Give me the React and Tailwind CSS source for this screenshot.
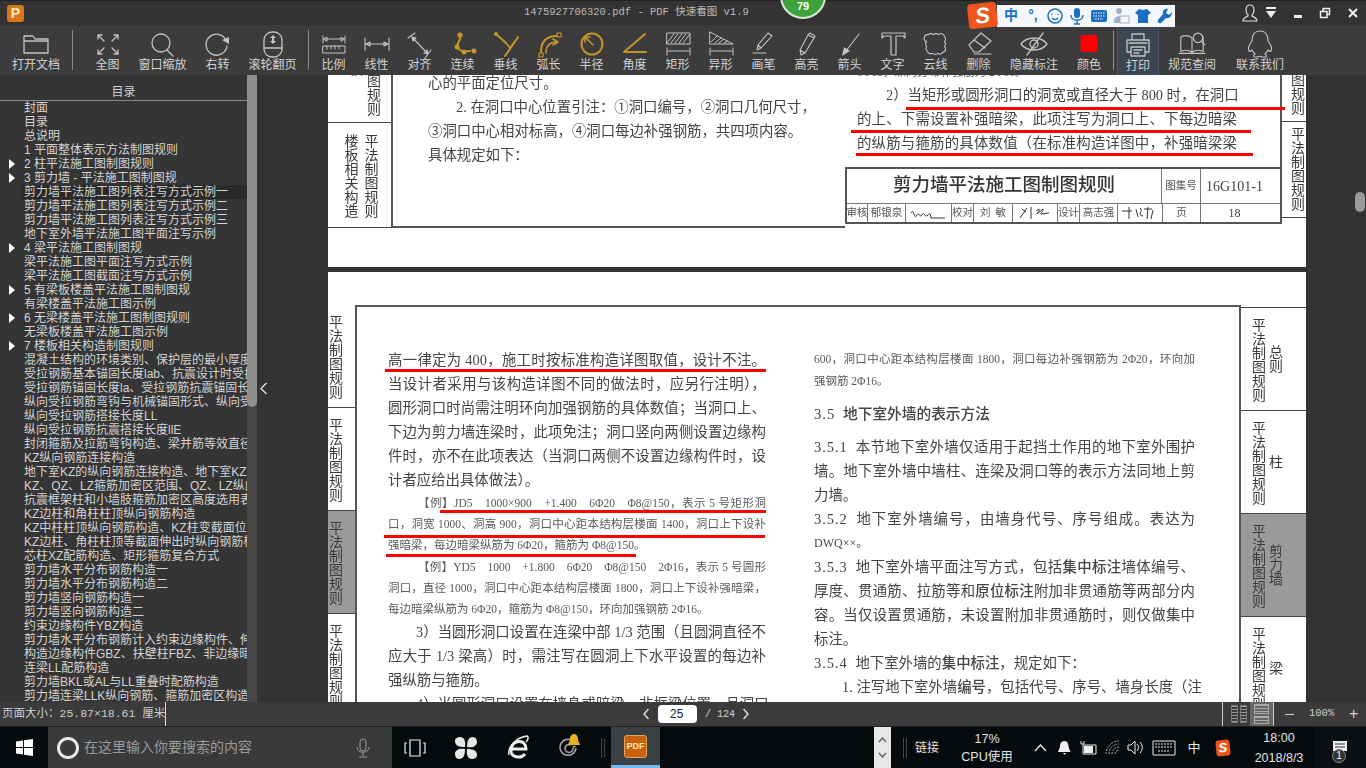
import React from "react";

const stroke = { fill: "none", stroke: "#c4c4c4", strokeWidth: 1.3, strokeLinecap: "round", strokeLinejoin: "round" };
const gold = { fill: "none", stroke: "#c5952c", strokeWidth: 2, strokeLinecap: "round", strokeLinejoin: "round" };

const ToolSvg = ({ children }) => (
  <svg width="34" height="30" viewBox="0 0 34 30" className="block">
    {children}
  </svg>
);

const hatch = (
  <g stroke="#c4c4c4" strokeWidth="1">
    <path d="M6 14L13 5M10 14L17 5M14 14L21 5M18 14L25 5M22 14L29 5" />
  </g>
);

const icons = {
  folder: <path {...stroke} d="M5 24V7h9l2 3h13v14zM5 12h24" />,
  fit: <path {...stroke} d="M7 6l6 6M7 6v4M7 6h4M27 6l-6 6M27 6v4M27 6h-4M7 25l6-6M7 25v-4M7 25h4M27 25l-6-6M27 25v-4M27 25h-4" />,
  search: <path {...stroke} d="M24 14a9 9 0 1 1-18 0a9 9 0 0 1 18 0zM21 21l6 6" />,
  rotate: (
    <g>
      <path {...stroke} d="M25 11a10.500 10.500 0 1 0 1 6" />
      <path fill="#c4c4c4" d="M21 11l7-3v7z" />
    </g>
  ),
  mouse: (
    <g>
      <rect {...stroke} x="8" y="3" width="18" height="25" rx="8" />
      <path {...stroke} d="M8 19h18" />
      <path fill="#c4c4c4" d="M17 6l3 3h-2v3h2l-3 3l-3-3h2V9h-2z" />
    </g>
  ),
  scale: (
    <g>
      <path {...stroke} strokeWidth="1" d="M6 7v7M28 7v7M7 10h20M7 10l3-2v4zM27 10l-3-2v4z" />
      <path {...stroke} strokeWidth="1" d="M6 17h22v7H6zM10 17v3M14 17v3M18 17v3M22 17v3" />
    </g>
  ),
  linear: <path {...stroke} strokeWidth="1.100" d="M5 9v12M29 9v12M6 15h22M6 15l4-2v4zM28 15l-4-2v4z" />,
  align: <path {...stroke} strokeWidth="1.100" d="M5 9l7-5M22 29l6-8M9 8l16 17M9 8l1 4l3-3zM25 25l-4-1l3-3z" />,
  chain: (
    <g>
      <path {...gold} strokeWidth="2" d="M14 6c2 6-5 8-2 13c2 3 6 4 12 3" />
      <circle cx="14" cy="6" r="2.500" fill="#c5952c" />
      <circle cx="11" cy="18" r="2.500" fill="#c5952c" />
      <circle cx="18" cy="23" r="2.500" fill="#c5952c" />
      <circle cx="28" cy="22" r="2.500" fill="#c5952c" />
    </g>
  ),
  perp: (
    <g>
      <path {...gold} d="M29 8L16 27M7 5l10 9" />
      <path {...gold} strokeWidth="1.500" d="M17 14l4 5l4-5" />
      <circle cx="7" cy="5" r="2" fill="#c5952c" />
    </g>
  ),
  arc: (
    <g>
      <path {...gold} d="M9 23c0-10 5-16 16-16" />
      <path {...gold} strokeWidth="1.500" d="M14 24c0-7 4-11 11-11M21 10l5 3l-5 3" />
      <path fill="none" stroke="#c5952c" strokeWidth="1.200" d="M7 24h4v4H7zM25 4h4v4h-4z" />
    </g>
  ),
  radius: (
    <g>
      <circle {...gold} cx="17" cy="15" r="10.500" />
      <path {...gold} strokeWidth="1.500" d="M18 16l-8-8M10 8v5M10 8h5" />
    </g>
  ),
  angle: <path {...gold} d="M27 5L6 23h22" />,
  rect: (
    <g>
      <path {...stroke} strokeWidth="1" d="M6 4h23v11H6z" />
      {hatch}
      <path {...stroke} strokeWidth="1" d="M6 19v7M29 19v7M7 22h21" />
    </g>
  ),
  shape: (
    <g>
      <path {...stroke} strokeWidth="1" d="M6 3l23 12H6z" />
      <path stroke="#c4c4c4" strokeWidth="1" d="M7 13L13 7M11 14L17 9M15 14L20 10M20 14l4-2" />
      <path {...stroke} strokeWidth="1" d="M6 19v7M29 19v7M7 22h21" />
    </g>
  ),
  pen: <path {...stroke} strokeWidth="1.100" d="M10 21l1-5L21 4l4 3L14 19zM11 16l3 3M6 24h13" />,
  marker: <path {...stroke} strokeWidth="1.100" d="M11 26l-1-5L18 6l6 3l-9 15zM10 21l5 3M18 6l2-2l5 3l-1 2" />,
  arrow: (
    <g>
      <path {...stroke} strokeWidth="1.100" d="M26 5L13 22" />
      <path fill="#c4c4c4" d="M9 27l2-9l6 4z" />
    </g>
  ),
  text: <path {...stroke} strokeWidth="1.200" d="M6 9V4h23v5l-2-2h-7v19h-5V7H8z" />,
  cloud: (
    <g transform="translate(17 15) scale(0.84) translate(-17 -15)">
      <path {...stroke} strokeWidth="1.300" d="M8 4a4 4 0 0 1 6 0a4 4 0 0 1 6 0a4 4 0 0 1 7 2a4 4 0 0 1 0 6a4 4 0 0 1 0 6a4 4 0 0 1-2 7a4 4 0 0 1-6 1a4 4 0 0 1-6 0a4 4 0 0 1-6-2a4 4 0 0 1-1-6a4 4 0 0 1 0-6a4 4 0 0 1 2-8z" />
    </g>
  ),
  eraser: <path {...stroke} strokeWidth="1.200" d="M7 16L19 4l10 8L17 23h-5zM12 11l11 8M12 25h17" />,
  eye: <path {...stroke} strokeWidth="1.300" d="M4 15c6-8 20-8 26 0c-6 8-20 8-26 0zM21 15a4 4 0 1 1-8 0a4 4 0 0 1 8 0zM26 4L10 26" />,
  color: <rect x="8.500" y="6" width="17" height="17" rx="2" fill="#ff0000" />,
  print: <path {...stroke} strokeWidth="1.300" d="M11 10V4h12v6M10 22H6V10h22v12h-4M10 17h14v9H10zM13 20h8M13 23h5M8 13h18" />,
  book: (
    <g transform="translate(17 14) scale(0.86) translate(-17 -15)">
      <path {...stroke} strokeWidth="1.300" d="M17 9c-4-3-9-3-13-1v17c4-2 9-2 13 1c4-3 9-3 13-1V8M17 9v17M2 27h30" />
      <circle {...stroke} strokeWidth="1.400" cx="24" cy="9" r="5.500" />
      <path {...stroke} strokeWidth="1.400" d="M28 13l4 4" />
    </g>
  ),
  qq: <path {...stroke} strokeWidth="1.200" d="M17 2c-6 0-8 5-8 10c-3 4-4 8-3 10c1 1 3-1 3-1c1 2 2 3 3 4c-2 1-2 3 0 3h3c1-1 3-1 4 0h3c2 0 2-2 0-3c1-1 2-2 3-4c0 0 2 2 3 1c1-2 0-6-3-10c0-5-2-10-8-10z" />,
};

const toolsA = [
  { label: "全图", icon: "fit", w: "w-[55px]" },
  { label: "窗口缩放", icon: "search", w: "w-[55px]" },
  { label: "右转", icon: "rotate", w: "w-[55px]" },
  { label: "滚轮翻页", icon: "mouse", w: "w-[55px]" },
];

const toolsB = [
  ["比例", "scale"], ["线性", "linear"], ["对齐", "align"], ["连续", "chain"], ["垂线", "perp"],
  ["弧长", "arc"], ["半径", "radius"], ["角度", "angle"], ["矩形", "rect"], ["异形", "shape"],
  ["画笔", "pen"], ["高亮", "marker"], ["箭头", "arrow"], ["文字", "text"], ["云线", "cloud"], ["删除", "eraser"],
];

const Tool = ({ label, icon, w, active }) => (
  <div className={`${w} h-[50px] shrink-0 flex flex-col items-center pt-[4px] ${active ? "bg-[#3a4752] border-x border-t border-[#46586a]" : ""}`}>
    <ToolSvg>{icons[icon]}</ToolSvg>
    <span className="text-[12px] leading-[15px] -mt-[1px] text-[#d2d2d2] whitespace-nowrap">{label}</span>
  </div>
);

const Sep = ({ cls }) => <div className={`w-px h-[40px] my-[5px] bg-[#8a8a8a] shrink-0 ${cls}`} />;

const toc = [
  ["封面"], ["目录"], ["总说明"], ["1 平面整体表示方法制图规则"], ["2 柱平法施工图制图规则", 1], ["3 剪力墙 - 平法施工图制图规", 1],
  ["剪力墙平法施工图列表注写方式示例一", 0, 1], ["剪力墙平法施工图列表注写方式示例二"], ["剪力墙平法施工图列表注写方式示例三"],
  ["地下室外墙平法施工图平面注写示例"], ["4 梁平法施工图制图规", 1], ["梁平法施工图平面注写方式示例"], ["梁平法施工图截面注写方式示例"],
  ["5 有梁板楼盖平法施工图制图规", 1], ["有梁楼盖平法施工图示例"], ["6 无梁楼盖平法施工图制图规则", 1], ["无梁板楼盖平法施工图示例"],
  ["7 楼板相关构造制图规则", 1], ["混凝土结构的环境类别、保护层的最小厚度"], ["受拉钢筋基本锚固长度lab、抗震设计时受拉钢筋"],
  ["受拉钢筋锚固长度la、受拉钢筋抗震锚固长度"], ["纵向受拉钢筋弯钩与机械锚固形式、纵向受力钢筋"], ["纵向受拉钢筋搭接长度LL"],
  ["纵向受拉钢筋抗震搭接长度llE"], ["封闭箍筋及拉筋弯钩构造、梁并筋等效直径"], ["KZ纵向钢筋连接构造"], ["地下室KZ的纵向钢筋连接构造、地下室KZ的"],
  ["KZ、QZ、LZ箍筋加密区范围、QZ、LZ纵向钢筋"], ["抗震框架柱和小墙肢箍筋加密区高度选用表"], ["KZ边柱和角柱柱顶纵向钢筋构造"],
  ["KZ中柱柱顶纵向钢筋构造、KZ柱变截面位置"], ["KZ边柱、角柱柱顶等截面伸出时纵向钢筋构造"], ["芯柱XZ配筋构造、矩形箍筋复合方式"],
  ["剪力墙水平分布钢筋构造一"], ["剪力墙水平分布钢筋构造二"], ["剪力墙竖向钢筋构造一"], ["剪力墙竖向钢筋构造二"], ["约束边缘构件YBZ构造"],
  ["剪力墙水平分布钢筋计入约束边缘构件、伸"], ["构造边缘构件GBZ、扶壁柱FBZ、非边缘暗柱"], ["连梁LL配筋构造"], ["剪力墙BKL或AL与LL重叠时配筋构造"],
  ["剪力墙连梁LLK纵向钢筋、箍筋加密区构造"],
];

// scanned text line, just stretches it to the column width
const L = ({ children, just, cls = "" }) => (
  <div className={`whitespace-nowrap ${just ? "[text-align-last:justify]" : ""} ${cls}`}>{children}</div>
);

const Big = ({ children, just, cls = "" }) => (
  <L just={just} cls={`h-[24px] leading-[24px] text-[14.4px] text-[#444] ${cls}`}>{children}</L>
);

const Small = ({ children, just, cls = "" }) => (
  <L just={just} cls={`h-[21px] leading-[21px] text-[11.5px] text-[#595959] ${cls}`}>{children}</L>
);

const Num = ({ children }) => <span className="tracking-[1px] mr-[4px]">{children}</span>;

const RedLine = ({ cls }) => <div className={`absolute h-[3px] bg-[#ff0000] ${cls}`} />;

const Vert = ({ children, cls = "" }) => (
  <div className={`[writing-mode:vertical-rl] text-[14px] leading-[16px] text-[#3a3a3a] ${cls}`}>{children}</div>
);

const RightTab = ({ name, gray }) => (
  <div className={`h-[103px] border-t border-[#444] flex ${gray ? "bg-[#9a9a9a]" : ""}`}>
    <Vert cls="ml-[8px] mt-[10px] h-[90px] overflow-hidden">平法制图规则</Vert>
    <Vert cls="ml-[1px] self-center">{name}</Vert>
  </div>
);

const LeftTab = ({ gray }) => (
  <div className={`h-[103px] border-b border-[#444] overflow-hidden ${gray ? "bg-[#9a9a9a]" : ""}`}>
    <Vert cls="-ml-[2px] mt-[10px]">平法制图规则</Vert>
  </div>
);

const Cell = ({ w, children, cls = "" }) => (
  <div className={`${w} border-r border-[#777] flex items-center justify-center whitespace-nowrap text-[10.500px] text-[#555] ${cls}`}>{children}</div>
);

const Sig = ({ d }) => (
  <svg width="40" height="16" viewBox="0 0 40 16">
    <path d={d} fill="none" stroke="#333" strokeWidth="1" />
  </svg>
);

const Page1 = () => (
  <div className="h-[192px] w-[978px] bg-white flex overflow-hidden shrink-0">
    <div className="w-[63px] shrink-0">
      <div className="h-[48px] border-b border-[#444] relative overflow-hidden">
        <Vert cls="absolute left-[36px] -top-[1px]">图规则</Vert>
        <Vert cls="absolute left-[18px] -top-[13px]">板</Vert>
      </div>
      <div className="h-[105px] border-b border-[#444] flex justify-center gap-[4px] pt-[11px] overflow-hidden">
        <Vert>楼板相关构造</Vert>
        <Vert>平法制图规则</Vert>
      </div>
    </div>
    <div className="w-[454px] shrink-0 h-[153px] border-l-2 border-b-2 border-[#555] pl-[35px] overflow-hidden">
      <div className="-mt-[4px]">
        <Big>心的平面定位尺寸。</Big>
        <Big cls="pl-[28px]">2. 在洞口中心位置引注：①洞口编号，②洞口几何尺寸，</Big>
        <Big>③洞口中心相对标高，④洞口每边补强钢筋，共四项内容。</Big>
        <Big>具体规定如下：</Big>
      </div>
    </div>
    <div className="w-[437px] shrink-0 h-[149px] overflow-hidden flex flex-col">
      <div className="flex-1 border-r-2 border-[#555] pl-[12px] overflow-hidden">
        <div className="-mt-[13px] w-[380px]">
          <Small cls="h-[19px] leading-[19px]">6Φ18，纵向分布补强筋为 2Φ16。</Small>
          <Big cls="pl-[29px]">2）当矩形或圆形洞口的洞宽或直径大于 800 时，在洞口</Big>
          <Big just>的上、下需设置补强暗梁，此项注写为洞口上、下每边暗梁</Big>
          <Big just>的纵筋与箍筋的具体数值（在标准构造详图中，补强暗梁梁</Big>
        </div>
      </div>
      <div className="h-[57px] shrink-0 border-2 border-[#555] flex flex-col">
        <div className="h-[36px] flex border-b border-[#777]">
          <div className="w-[315px] border-r border-[#777] flex items-center justify-center text-[18.500px] font-medium text-[#333]">剪力墙平法施工图制图规则</div>
          <Cell w="w-[39px]">图集号</Cell>
          <div className="flex-1 flex items-center justify-center pr-[12px] text-[14px] text-[#444]">16G101-1</div>
        </div>
        <div className="flex-1 flex">
          <Cell w="w-[21px]">审核</Cell>
          <Cell w="w-[38px]">郁银泉</Cell>
          <Cell w="w-[46px]"><Sig d="M2 8c3-6 3 8 6 2c2-3 3 3 5 0c2-4 3 2 5 1c3-3 3-4 4 2h14" /></Cell>
          <Cell w="w-[22px]">校对</Cell>
          <Cell w="w-[39px]">刘&nbsp;&nbsp;敏</Cell>
          <Cell w="w-[45px]"><Sig d="M7 4l4 3M5 13l7-10M16 2v12M21 6l3-2c1 4-3 4-2 5l6-5c0 4-3 4-2 5l8-1" /></Cell>
          <Cell w="w-[22px]">设计</Cell>
          <Cell w="w-[38px]">高志强</Cell>
          <Cell w="w-[45px]"><Sig d="M2 6h10M9 2v12M16 4l2 8M20 3c4 3-4 7 3 8M24 4h8M28 2l-1 12M33 5l-2 9" /></Cell>
          <Cell w="w-[38px]">页</Cell>
          <div className="flex-1 flex items-center justify-center pr-[12px] text-[12px] text-[#444]">18</div>
        </div>
      </div>
    </div>
    <div className="w-[24px] shrink-0 h-[147px] overflow-hidden">
      <div className="h-[47px] border-b border-[#444] relative overflow-hidden">
        <Vert cls="absolute left-[6px] -top-[2px]">图规则</Vert>
      </div>
      <Vert cls="ml-[6px] mt-[5px] h-[90px] overflow-hidden">平法制图规则</Vert>
      <div className="border-t border-[#444]" />
    </div>
  </div>
);

const Page2 = () => (
  <div className="w-[978px] h-[500px] bg-white flex shrink-0 mt-[5px]">
    <div className="w-[27px] shrink-0 pt-[33px]">
      <LeftTab />
      <LeftTab />
      <LeftTab gray />
      <LeftTab />
    </div>
    <div className="w-[886px] shrink-0 mt-[33px] border-t-2 border-l-2 border-r-2 border-[#555] flex pl-[31px] pt-[41px] gap-[48px]">
      <div className="w-[378px] shrink-0">
        <Big just>高一律定为 400，施工时按标准构造详图取值，设计不注。</Big>
        <Big just>当设计者采用与该构造详图不同的做法时，应另行注明），</Big>
        <Big just>圆形洞口时尚需注明环向加强钢筋的具体数值；当洞口上、</Big>
        <Big just>下边为剪力墙连梁时，此项免注；洞口竖向两侧设置边缘构</Big>
        <Big just>件时，亦不在此项表达（当洞口两侧不设置边缘构件时，设</Big>
        <Big>计者应给出具体做法）。</Big>
        <Small just cls="pl-[30px] mt-[1px]">【例】JD5　1000×900　+1.400　6Φ20　Φ8@150，表示 5 号矩形洞</Small>
        <Small just>口，洞宽 1000、洞高 900，洞口中心距本结构层楼面 1400，洞口上下设补</Small>
        <Small>强暗梁，每边暗梁纵筋为 6Φ20，箍筋为 Φ8@150。</Small>
        <Small just cls="pl-[30px] mt-[1px]">【例】YD5　1000　+1.800　6Φ20　Φ8@150　2Φ16，表示 5 号圆形</Small>
        <Small just>洞口，直径 1000，洞口中心距本结构层楼面 1800，洞口上下设补强暗梁，</Small>
        <Small>每边暗梁纵筋为 6Φ20，箍筋为 Φ8@150，环向加强钢筋 2Φ16。</Small>
        <Big just cls="pl-[28px]">3）当圆形洞口设置在连梁中部 1/3 范围（且圆洞直径不</Big>
        <Big just>应大于 1/3 梁高）时，需注写在圆洞上下水平设置的每边补</Big>
        <Big>强纵筋与箍筋。</Big>
        <Big just cls="pl-[28px]">4）当圆形洞口设置在墙身或暗梁、非框梁位置，且洞口</Big>
      </div>
      <div className="w-[381px] shrink-0">
        <Small just cls="h-[22px] leading-[22px]">600，洞口中心距本结构层楼面 1800，洞口每边补强钢筋为 2Φ20，环向加</Small>
        <Small cls="h-[22px] leading-[22px]">强钢筋 2Φ16。</Small>
        <Big cls="mt-[10px] font-medium text-[14.7px] text-[#333]"><Num>3.5</Num>&nbsp;地下室外墙的表示方法</Big>
        <Big just cls="mt-[9px]"><Num>3.5.1</Num>&nbsp;本节地下室外墙仅适用于起挡土作用的地下室外围护</Big>
        <Big just>墙。地下室外墙中墙柱、连梁及洞口等的表示方法同地上剪</Big>
        <Big>力墙。</Big>
        <Big just><Num>3.5.2</Num>&nbsp;地下室外墙编号，由墙身代号、序号组成。表达为</Big>
        <Big cls="!text-[12px]">DWQ××。</Big>
        <Big just><Num>3.5.3</Num>&nbsp;地下室外墙平面注写方式，包括<b className="font-medium">集中标注</b>墙体编号、</Big>
        <Big just>厚度、贯通筋、拉筋等和<b className="font-medium">原位标注</b>附加非贯通筋等两部分内</Big>
        <Big just>容。当仅设置贯通筋，未设置附加非贯通筋时，则仅做集中</Big>
        <Big>标注。</Big>
        <Big><Num>3.5.4</Num>&nbsp;地下室外墙的<b className="font-medium">集中标注</b>，规定如下：</Big>
        <Big just cls="pl-[28px]">1. 注写地下室外墙<b className="font-medium">编号</b>，包括代号、序号、墙身长度（注</Big>
      </div>
    </div>
    <div className="w-[65px] shrink-0 pt-[35px]">
      <RightTab name="总则" />
      <RightTab name="柱" />
      <RightTab name="剪力墙" gray />
      <RightTab name="梁" />
    </div>
  </div>
);

const Small16 = ({ children, cls = "" }) => (
  <svg width="18" height="18" viewBox="0 0 18 18" className={`shrink-0 ${cls}`}>{children}</svg>
);

const SogouBar = () => (
  <div className="absolute left-[968px] top-[2px] flex items-center z-10">
    <div className="w-[29px] h-[25px] bg-[#f0551e] rounded-[4px] -rotate-6 flex items-center justify-center text-white font-black italic text-[22px] leading-none shrink-0">S</div>
    <div className="w-[178px] h-[22px] bg-[#f4f7fb] flex items-center gap-[4px] pl-[5px] text-[#1a6fc4] text-[14px] font-bold">
      <span className="w-[18px] text-center">中</span>
      <span className="w-[18px] text-center">°,</span>
      <Small16><circle cx="9" cy="9" r="7" fill="none" stroke="#1a6fc4" strokeWidth="1.500" /><path d="M6 7v1M12 7v1M6 11c2 2 4 2 6 0" stroke="#1a6fc4" fill="none" strokeWidth="1.400" /></Small16>
      <Small16><rect x="6" y="1" width="6" height="10" rx="3" fill="#1a6fc4" /><path d="M3 8c0 7 12 7 12 0M9 13v4M6 17h6" stroke="#1a6fc4" fill="none" strokeWidth="1.400" /></Small16>
      <Small16><rect x="1" y="3" width="16" height="12" rx="2" fill="#1a6fc4" /><path d="M3 6h12M3 9h12M5 12h8" stroke="#fff" strokeDasharray="1.500 1" /></Small16>
      <Small16><circle cx="7" cy="4" r="3" fill="#9fb2c4" /><path d="M2 14c0-6 9-6 10-2v4H2z" fill="#9fb2c4" /><rect x="8" y="9" width="9" height="7" fill="#f4f7fb" stroke="#9fb2c4" /></Small16>
      <Small16><path d="M5 2l4 1l4-1l4 4l-3 2v8H4V8L1 6z" fill="#1a6fc4" /></Small16>
      <Small16><path d="M16 5l-3 3l-3-2l2-4c-3-1-6 2-5 5L2 13c-1 2 1 4 3 3l5-5c3 1 6-2 6-6z" fill="#1a6fc4" /></Small16>
    </div>
  </div>
);

const TitleBar = () => (
  <div className="h-[25px] bg-[#333333] border-t border-[#222] relative flex items-center shrink-0">
    <div className="ml-[7px] w-[17px] h-[17px] rounded-[3px] bg-[#d9761c] flex items-center justify-center text-[#ffe9b8] text-[14px] font-bold leading-none">P</div>
    <div className="ml-[500px] w-[224px] text-[10.500px] text-[#b9b9b9] whitespace-nowrap font-['Liberation_Mono','Noto_Sans_CJK_SC',monospace]">1475927706320.pdf - PDF 快速看图 v1.9</div>
    <div className="absolute left-[780px] -top-[28px] w-[46px] h-[46px] rounded-full bg-[#3da23c] border-2 border-[#d8ead6] flex items-end justify-center pb-[3px] text-white text-[11px] font-bold z-10">79</div>
    <SogouBar />
    <div className="absolute right-0 top-0 h-[24px] flex items-center">
      <svg width="20" height="20" viewBox="0 0 20 20" className="mr-[4px]"><path fill="none" stroke="#ddd" strokeWidth="1.200" d="M10 2c-3 0-4 2-4 5c0 2 1 4 2 5v1c-2 1-5 2-5 5h14c0-3-3-4-5-5v-1c1-1 2-3 2-5c0-3-1-5-4-5z" /></svg>
      <svg width="14" height="14" viewBox="0 0 14 14" className="mr-[16px]"><path fill="#eee" d="M2 1h10v2H2zM2 5h10l-5 7z" /></svg>
      <div className="w-[8px] h-[3px] bg-[#eee] mt-[6px] mr-[17px]" />
      <svg width="12" height="12" viewBox="0 0 12 12" className="mr-[16px]"><path fill="none" stroke="#eee" strokeWidth="1.500" d="M1.500 4.500h6.500v6h-6.500zM4 4V1.500h6.500v6H8" /></svg>
      <svg width="12" height="12" viewBox="0 0 12 12" className="mr-[7px]"><path stroke="#eee" strokeWidth="2" d="M2 2l8 8M10 2l-8 8" /></svg>
    </div>
  </div>
);

const Toolbar = () => (
  <div className="h-[50px] bg-[#3c3c3c] flex shrink-0">
    <Tool label="打开文档" icon="folder" w="w-[72px]" />
    <Sep />
    <div className="w-[7px] shrink-0" />
    {toolsA.map((t) => <Tool key={t.label} {...t} />)}
    <div className="w-[8px] shrink-0" />
    <Sep />
    <div className="w-[3px] shrink-0" />
    {toolsB.map(([label, icon]) => <Tool key={label} label={label} icon={icon} w="w-[43px]" />)}
    <div className="w-[1px] shrink-0" />
    <Tool label="隐藏标注" icon="eye" w="w-[66px]" />
    <Tool label="颜色" icon="color" w="w-[44px]" />
    <div className="w-[2px] shrink-0" />
    <Sep />
    <div className="w-[3px] shrink-0" />
    <Tool label="打印" icon="print" w="w-[42px]" active />
    <div className="w-[6px] shrink-0" />
    <Tool label="规范查阅" icon="book" w="w-[54px]" />
    <div className="w-[14px] shrink-0" />
    <Tool label="联系我们" icon="qq" w="w-[54px]" />
  </div>
);

const Sidebar = () => (
  <div className="w-[247px] shrink-0 bg-[#353535] overflow-hidden">
    <div className="h-[26px] border-b border-[#8a8a8a] flex items-end justify-center text-[12px] leading-[16px] text-[#cfcfcf]">目录</div>
    <div className="font-['Liberation_Sans','Noto_Sans_CJK_SC',sans-serif]">
      {toc.map(([name, arrow, sel]) => (
        <div key={name} className={`relative h-[14px] leading-[14px] text-[12px] text-[#d4d4d4] whitespace-nowrap overflow-hidden pl-[24px] ${sel ? "bg-[#2a2a2a] ml-[21px] !pl-[3px]" : ""}`}>
          {arrow ? <span className="absolute left-[9px] top-[2px] w-0 h-0 border-y-[5px] border-y-transparent border-l-[6px] border-l-white" /> : null}
          {name}
        </div>
      ))}
    </div>
  </div>
);

const Main = () => (
  <div className="h-[627px] flex bg-[#333333] overflow-hidden shrink-0">
    <Sidebar />
    <div className="w-[10px] shrink-0 bg-[#474747]">
      <div className="h-[332px] bg-[#8f8f8f] rounded-b-[5px]" />
    </div>
    <div className="w-[13px] shrink-0 flex items-center justify-center text-[#e0e0e0]">
      <svg width="9" height="13" viewBox="0 0 9 13"><path d="M7.500 1L2 6.500L7.500 12" fill="none" stroke="#ddd" strokeWidth="1.500" /></svg>
    </div>
    <div className="flex-1 pl-[58px] relative overflow-hidden font-['Liberation_Serif','Noto_Sans_CJK_SC',serif]">
      <div className="blur-[0.35px]">
        <Page1 />
        <Page2 />
      </div>
      {/* markup drawn by the user on top of the scan, coordinates are relative to this pane */}
      <RedLine cls="left-[636px] top-[32px] w-[379px]" />
      <RedLine cls="left-[581px] top-[55px] w-[400px]" />
      <RedLine cls="left-[586px] top-[78px] w-[397px]" />
      <RedLine cls="left-[115px] top-[294px] w-[381px]" />
      <RedLine cls="left-[170px] top-[435px] w-[326px]" />
      <RedLine cls="left-[114px] top-[460px] w-[381px]" />
      <RedLine cls="left-[116px] top-[479px] w-[250px]" />
    </div>
    <div className="w-[11px] shrink-0 pt-[117px]">
      <div className="w-[10px] h-[20px] rounded-[5px] bg-[#9a9a9a]" />
    </div>
  </div>
);

const StatusBar = () => (
  <div className="h-[25px] bg-[#3b3b3b] border-b border-[#222] flex items-center text-[#cfcfcf] text-[12px] shrink-0">
    <div className="ml-[2px] w-[164px] h-[24px] leading-[24px] border-r border-[#ddd] whitespace-nowrap font-['Liberation_Mono','Noto_Sans_CJK_SC',monospace] text-[11.5px]">页面大小：25.87×18.61 厘米</div>
    <svg width="8" height="12" viewBox="0 0 8 12" className="ml-[476px]"><path d="M6.500 1L2 6l4.500 5" fill="none" stroke="#ddd" strokeWidth="1.500" /></svg>
    <div className="ml-[8px] w-[39px] h-[18px] bg-white rounded-[4px] text-[#222] text-[12px] leading-[18px] pl-[12px]">25</div>
    <div className="ml-[8px] w-[36px] text-[10px] whitespace-nowrap font-['Liberation_Mono',monospace]">/ 124</div>
    <svg width="8" height="12" viewBox="0 0 8 12" className="ml-[1px]"><path d="M1.500 1L6 6l-4.500 5" fill="none" stroke="#ddd" strokeWidth="1.500" /></svg>
    <div className="ml-[472px] w-px h-[24px] bg-[#ccc]" />
    <div className="ml-[6px] w-[20px] h-[20px] flex items-center justify-center gap-[2px]">
      <div className="w-[7px] h-[18px] border border-[#777] bg-[repeating-linear-gradient(#999_0_1px,transparent_1px_3px)]" />
      <div className="w-[7px] h-[18px] border border-[#777] bg-[repeating-linear-gradient(#999_0_1px,transparent_1px_3px)]" />
    </div>
    <div className="ml-[1px] w-[23px] h-[24px] bg-[#666] flex flex-col items-center justify-center gap-[2px]">
      <div className="w-[15px] h-[10px] border border-[#aaa] bg-[repeating-linear-gradient(#aaa_0_1px,transparent_1px_3px)]" />
      <div className="w-[15px] h-[8px] border border-[#aaa] bg-[repeating-linear-gradient(#aaa_0_1px,transparent_1px_3px)]" />
    </div>
    <div className="w-px h-[24px] bg-[#ccc]" />
    <div className="ml-[11px] w-[9px] h-px bg-[#ccc]" />
    <div className="ml-[15px] w-[30px] text-[10.500px] font-['Liberation_Mono',monospace] whitespace-nowrap">100%</div>
    <div className="ml-[10px] text-[16px] leading-none">+</div>
  </div>
);

const Tray = ({ w, children, cls = "" }) => (
  <div className={`${w} shrink-0 flex items-center justify-center h-full ${cls}`}>{children}</div>
);

const Taskbar = () => (
  <div className="flex-1 bg-[#050a0d] flex items-center text-[#e4e4e4] font-['Liberation_Sans','Noto_Sans_CJK_SC',sans-serif] overflow-hidden">
    <Tray w="w-[48px]">
      <svg width="17" height="17" viewBox="0 0 17 17"><path fill="#fff" d="M0 2.500l7-1v6.500H0zM8 1.300l9-1.300v8H8zM0 9h7v6.500l-7-1zM8 9h9v8l-9-1.300z" /></svg>
    </Tray>
    <div className="w-[344px] h-full bg-[#3a3a3a] flex items-center shrink-0">
      <div className="ml-[9px] w-[22px] h-[22px] rounded-full border-[3px] border-[#e8e8e8] shrink-0" />
      <div className="ml-[5px] w-[270px] text-[14px] text-[#9a9a9a] whitespace-nowrap">在这里输入你要搜索的内容</div>
      <svg width="14" height="20" viewBox="0 0 14 20" className="ml-[2px]"><rect x="4" y="1" width="6" height="12" rx="3" fill="none" stroke="#999" /><path d="M1 9c0 7 12 7 12 0M7 15v3M3 19h8" fill="none" stroke="#999" /></svg>
    </div>
    <Tray w="w-[46px]">
      <svg width="22" height="18" viewBox="0 0 22 18"><path d="M6 1h10v16H6zM3 4H1v10h2M19 4h2v10h-2" fill="none" stroke="#eee" strokeWidth="1.200" /></svg>
    </Tray>
    <Tray w="w-[56px]">
      <svg width="24" height="24" viewBox="0 0 24 24"><path fill="#e8e8e8" d="M11 11C4 11 1 9 1 5c0-3 3-4 5-4c4 0 6 4 5 10zM13 11c0-7 2-10 6-10c3 0 4 3 4 5c0 4-4 6-10 5zM13 13c7 0 10 2 10 6c0 3-3 4-5 4c-4 0-6-4-5-10zM11 13c0 7-2 10-6 10c-3 0-4-3-4-5c0-4 4-6 10-5z" /></svg>
    </Tray>
    <Tray w="w-[48px]">
      <svg width="24" height="26" viewBox="0 0 24 26"><path fill="none" stroke="#eee" strokeWidth="3" d="M5 14h15c0-10-13-10-15 0c-1 9 10 10 14 5" /><path fill="none" stroke="#eee" strokeWidth="1.500" d="M3 20C1 11 12 2 21 1c2 1 1 4-1 6" /></svg>
    </Tray>
    <Tray w="w-[52px]" cls="relative">
      <svg width="18" height="20" viewBox="0 0 18 20"><path fill="none" stroke="#aaa" strokeWidth="1.500" d="M14 3A8 8 0 1 0 17 10M12 7a4 4 0 1 0 2 3" /></svg>
      <svg width="14" height="16" viewBox="0 0 14 16" className="absolute left-[25px] top-[6px]"><path fill="#e8b321" d="M7 1c3 0 4 3 4 5c0 3 2 4 2 6H1c0-2 2-3 2-6c0-2 1-5 4-5zM5 13h4l-2 2z" /></svg>
    </Tray>
    <div className="w-px h-[20px] bg-[#444] ml-[7px]" />
    <div className="w-px h-[20px] bg-[#444] ml-[2px] mr-[6px]" />
    <div className="w-[49px] h-full bg-[#3a4145] border-b-[3px] border-[#76b9ed] flex items-center justify-center shrink-0">
      <div className="w-[23px] h-[23px] rounded-[3px] bg-[#c9610f] border border-[#e6a35c] flex items-center justify-center text-[9px] font-bold text-[#ffe3b0] leading-none">PDF</div>
    </div>
    <div className="w-[214px] shrink-0" />
    <div className="w-[17px] h-full bg-[#e8e8e8] flex flex-col items-center justify-around py-[5px] shrink-0">
      <svg width="9" height="6" viewBox="0 0 9 6"><path d="M1 5l3.500-4L8 5" fill="none" stroke="#666" strokeWidth="1.500" /></svg>
      <svg width="9" height="6" viewBox="0 0 9 6"><path d="M1 1l3.500 4L8 1" fill="none" stroke="#666" strokeWidth="1.500" /></svg>
    </div>
    <div className="w-px h-[20px] bg-[#444] ml-[12px]" />
    <div className="w-px h-[20px] bg-[#444] ml-[2px]" />
    <div className="ml-[8px] w-[28px] text-[12px] whitespace-nowrap shrink-0">链接</div>
    <div className="ml-[14px] w-[60px] text-center text-[12.500px] leading-[18px] shrink-0">
      <div>17%</div>
      <div>CPU使用</div>
    </div>
    <Tray w="w-[26px]" cls="ml-[10px]">
      <svg width="13" height="8" viewBox="0 0 13 8"><path d="M1 7l5.500-6L12 7" fill="none" stroke="#eee" strokeWidth="1.300" /></svg>
    </Tray>
    <Tray w="w-[22px]">
      <svg width="13" height="16" viewBox="0 0 13 16"><path fill="#eee" d="M6.500 1c3 0 4 3 4 5c0 3 2 4 2 6H0c0-2 2-3 2-6c0-2 1-5 4.500-5zM5 13h3l-1.500 2z" /></svg>
    </Tray>
    <Tray w="w-[27px]">
      <svg width="17" height="14" viewBox="0 0 17 14"><path d="M3 4h13v9H3zM1 0v3h3V0" fill="none" stroke="#eee" /><rect x="4" y="5" width="9" height="7" fill="#eee" /></svg>
    </Tray>
    <Tray w="w-[22px]">
      <svg width="16" height="15" viewBox="0 0 16 15"><path d="M1 14a13 13 0 0 1 13-13M4 14a10 10 0 0 1 10-10M7 14a7 7 0 0 1 7-7M10 14a4 4 0 0 1 4-4" fill="none" stroke="#aaa" strokeDasharray="2 1" /></svg>
    </Tray>
    <Tray w="w-[22px]">
      <svg width="16" height="15" viewBox="0 0 16 15"><path d="M1 5h3l4-4v13l-4-4H1zM10 4c2 2 2 5 0 7M13 2c3 3 3 8 0 11" fill="none" stroke="#eee" /></svg>
    </Tray>
    <Tray w="w-[36px]">
      <svg width="24" height="16" viewBox="0 0 24 16"><path d="M1 1h22v14H1z" fill="none" stroke="#eee" /><path d="M3 4h18M3 7h18M6 11h12" stroke="#eee" strokeDasharray="2 1" /></svg>
    </Tray>
    <Tray w="w-[20px]" cls="text-[13px] ml-[2px]">中</Tray>
    <Tray w="w-[38px]">
      <div className="w-[14px] h-[16px] bg-[#f0551e] rounded-[3px] -rotate-6 text-white text-[13px] italic font-black leading-[16px] text-center">S</div>
    </Tray>
    <div className="ml-[2px] w-[70px] text-center text-[12.500px] leading-[20px] shrink-0 whitespace-nowrap">
      <div>18:00</div>
      <div>2018/8/3</div>
    </div>
    <div className="flex-1 h-full bg-[#0b0f12] relative flex items-center justify-center">
      <svg width="14" height="16" viewBox="0 0 14 16"><path fill="#eee" d="M0 1h14v10H6l-3 3v-3H0z" /><path d="M2 4h10M2 7h10" stroke="#333" /></svg>
      <div className="absolute left-[18px] top-[22px] w-[14px] h-[14px] rounded-full bg-[#333] border border-[#888] text-[10px] leading-[12px] text-center text-white">1</div>
    </div>
  </div>
);

export default function App() {
  return (
    <div className="w-[1366px] h-[768px] overflow-hidden flex flex-col bg-[#333333] font-['Liberation_Sans','Noto_Sans_CJK_SC',sans-serif]">
      <TitleBar />
      <Toolbar />
      <Main />
      <StatusBar />
      <Taskbar />
    </div>
  );
}
